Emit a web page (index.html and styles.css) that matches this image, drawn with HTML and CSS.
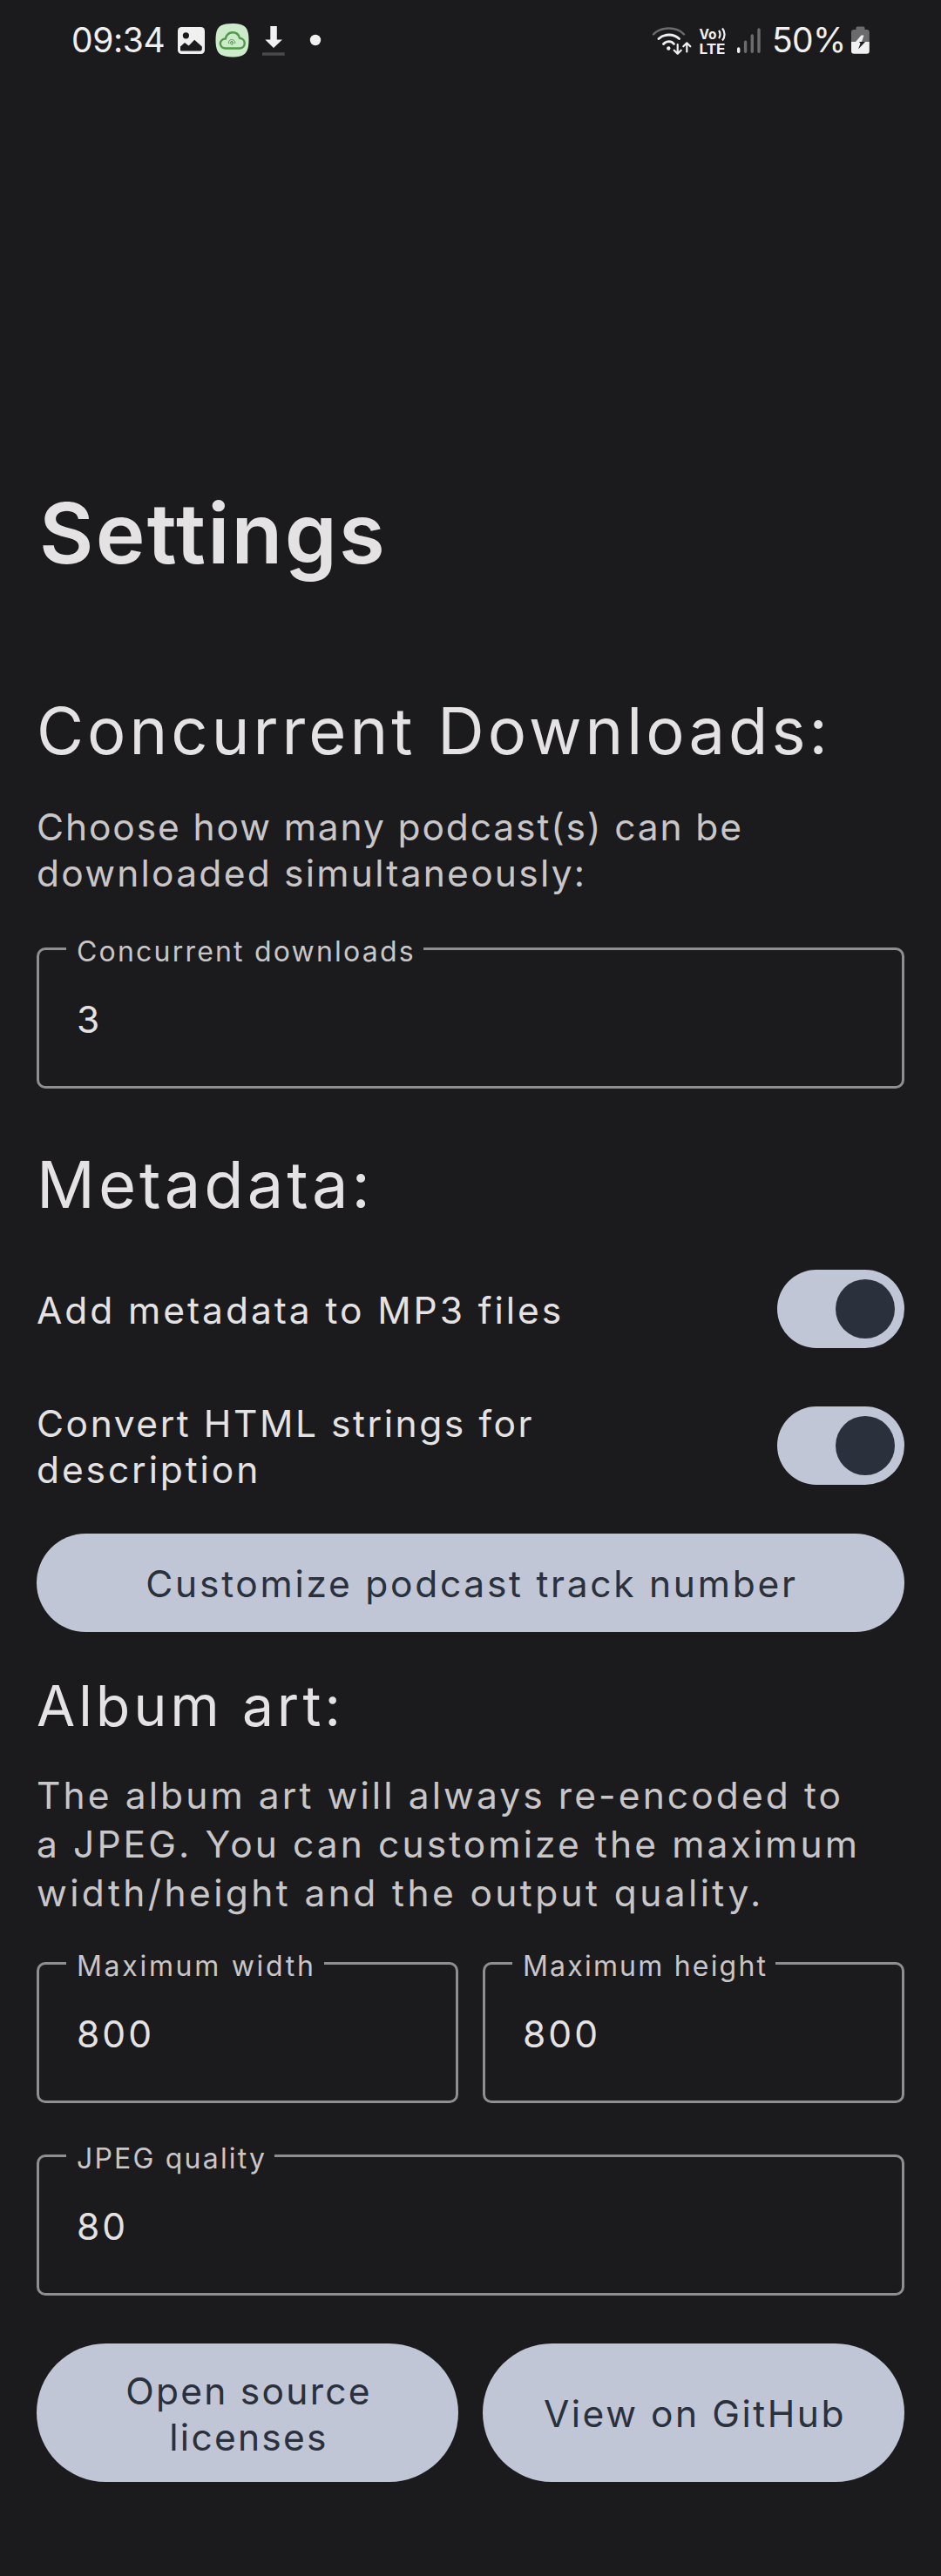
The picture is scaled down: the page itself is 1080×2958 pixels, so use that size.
FILE: index.html
```html
<!DOCTYPE html>
<html lang="en">
<head>
<meta charset="utf-8">
<title>Settings</title>
<link rel="stylesheet" href="styles.css">
</head>
<body>
<header class="status">
  <div class="status-group">
    <span class="clock">09:34</span>
    <svg width="40" height="92" viewBox="200 0 40 92"><rect x="204" y="31" width="31" height="31" rx="4.500" fill="#f0f0f0"/><circle cx="213.400" cy="40.800" r="3.600" fill="#1b1b1d"/><path d="M207 58v-4.500l5-4.400 4.600 3.400 6.600-6.800 8.600 7.900V57l-1.300 1.500H208z" fill="#1b1b1d"/></svg>
    <svg width="52" height="92" viewBox="240 0 52 92"><path d="M266.500 27c14.500 0 19 4.500 19 19s-4.500 19.500-19 19.500-19-5-19-19.500 4.500-19 19-19z" fill="#cdeaca"/><path d="M259 55.500c-8.500-.5-8-10.500-.2-11 2.200-9.500 14-9.500 16.200-.8 7.500.6 7.800 11.300.2 11.800z" fill="none" stroke="#509a48" stroke-width="2.400"/><path d="M262.500 50c-1-6 8-6 7.200 0M264.300 50.500c-.6-4 4-4 3.500 0M266.100 47v5" fill="none" stroke="#509a48" stroke-width="1"/></svg>
    <svg width="48" height="92" viewBox="292 0 48 92"><path d="M310.300 30h7.500v15.500h6.200l-10 9.500-9.700-9.500h6z" fill="#f0f0f0"/><path d="M301 60.300h25.700v3.500H301z" fill="#4a4a4c"/></svg>
    <svg width="40" height="92" viewBox="340 0 40 92"><circle cx="362" cy="46" r="6.200" fill="#f0f0f0"/></svg>
  </div>
  <div class="status-group">
    <svg width="56" height="92" viewBox="740 0 56 92" fill="none" stroke="#f0f0f0" stroke-width="2.800" stroke-linecap="round" stroke-linejoin="round"><path d="M750 39.300c9-9 26-9 35 0" stroke="#6b6b6d" stroke-width="2.400"/><path d="M756 44.500c6.500-6 17-6 23.500 0"/><path d="M761.500 50.500c3.500-3.800 9-3.800 12 0"/><circle cx="767.300" cy="55.500" r="2.200" fill="#f0f0f0" stroke="none"/><path d="M777.700 51v10.500m-4-3.800 4 4 4-4M788.300 59.500V49.500m-4 3.800 4-4 4 4" stroke-width="2.200"/></svg>
    <svg class="volte" width="44" height="92" viewBox="796 0 44 92"><text x="802.500" y="44.800" textLength="20" lengthAdjust="spacingAndGlyphs">Vo</text><text x="802.500" y="62" textLength="30" lengthAdjust="spacingAndGlyphs">LTE</text><path d="M825 35c2 2.500 2 6.500 0 9M829 32.500c3.400 4 3.400 10 0 14" fill="none" stroke="#f0f0f0" stroke-width="2.200"/></svg>
    <svg width="40" height="92" viewBox="840 0 40 92" fill="none" stroke="#6b6b6d" stroke-width="3.400" stroke-linecap="round"><path d="M847.700 56v3.300" stroke="#f0f0f0"/><path d="M855.600 48.200v11.100M863.300 41v18.300M871 34v25.300"/></svg>
    <span class="battery-level">50%</span>
    <svg width="30" height="92" viewBox="973 0 30 92"><path d="M982.500 34v-2q0-1.500 1.500-1.500h7q1.500 0 1.500 1.500v2h2.300q3 0 3 3v11H977V37q0-3 3-3z" fill="#6b6b6d"/><path d="M977 48h20.800v10.700q0 3-3 3H980q-3 0-3-3z" fill="#f0f0f0"/><path d="M988.500 40.500h3l-2.500 7.500h-7z" fill="#f0f0f0"/><path d="M986 48h7l-8 8.500 2.500-6.500z" fill="#1b1b1d"/></svg>
  </div>
</header>
<main class="page">
  <h1 class="title">Settings</h1>
  <section class="section">
    <h2 class="heading">Concurrent Downloads:</h2>
    <p class="intro"><span class="snug">Choose how many podcast(s) can be</span><br><span class="normal">downloaded simultaneously:</span></p>
    <div class="field"><span class="field-label">Concurrent downloads</span><span class="field-value">3</span></div>
  </section>
  <section class="section metadata">
    <h2 class="heading">Metadata:</h2>
    <div class="option"><p class="option-text wide-text">Add metadata to MP3 files</p><span class="switch"><span class="thumb"></span></span></div>
    <div class="option"><p class="option-text">Convert HTML strings for<br><span class="wide-text">description</span></p><span class="switch"><span class="thumb"></span></span></div>
    <button class="button wide">Customize podcast track number</button>
  </section>
  <section class="section album">
    <h2 class="heading small">Album art:</h2>
    <p class="intro">The album art will always re-encoded to<br>a JPEG. You can customize the maximum<br><span class="loose">width/height and the output quality.</span></p>
    <div class="pair">
      <div class="field"><span class="field-label spaced">Maximum width</span><span class="field-value">800</span></div>
      <div class="field"><span class="field-label">Maximum height</span><span class="field-value">800</span></div>
    </div>
    <div class="field quality"><span class="field-label">JPEG quality</span><span class="field-value">80</span></div>
    <div class="pair actions">
      <button class="button normal">Open source<br>licenses</button>
      <button class="button">View on GitHub</button>
    </div>
  </section>
</main>
</body>
</html>
```
FILE: styles.css
```css
* { box-sizing: border-box; }
body { margin: 0; background: #1b1b1d; color: #e5e2e4; font-family: Inter, "Noto Sans", sans-serif; font-size: 42.5px; line-height: 53px; }
h1, h2, p { margin: 0; font-weight: 400; }

/* Status bar */
.status { display: flex; justify-content: space-between; height: 92px; padding: 0 77px 0 82px; color: #f0f0f0; font-size: 39px; line-height: 92px; }
.status-group { display: flex; }
.status svg { display: block; }
.clock { width: 118px; letter-spacing: -0.4px; }
.battery-level { width: 93px; padding-left: 6px; letter-spacing: -0.6px; }
.volte { fill: #f0f0f0; font-size: 16.5px; font-weight: 700; }

/* Page and headings */
.page { padding: 464px 42px 108px; }
.title { font-size: 96px; line-height: 112px; font-weight: 600; letter-spacing: 2.3px; padding-left: 3px; margin-bottom: 129px; }
.heading { font-size: 74px; line-height: 84px; letter-spacing: 4.06px; white-space: nowrap; }
.heading.small { font-size: 64px; line-height: 74px; letter-spacing: 4.2px; }
.intro { color: #c8c6c8; margin: 42px 0 59px; white-space: nowrap; }

/* Tracking */
.snug { letter-spacing: 1.89px; }
.normal { letter-spacing: 2.24px; }
.wide-text { letter-spacing: 2.9px; }
.loose { letter-spacing: 3.4px; }

/* Outlined text fields */
.field { position: relative; height: 162px; border: 3px solid #8f8f92; border-radius: 10px; padding: 53px 43px 0; }
.field-label { position: absolute; left: 31px; top: -16px; padding: 0 9px 0 12px; background: #1b1b1d; color: #c8c6c8; font-size: 32px; line-height: 36px; letter-spacing: 2.2px; white-space: nowrap; }
.field-label.spaced { letter-spacing: 2.7px; }
.field-value { display: block; letter-spacing: 3.05px; }

/* Options */
.metadata { margin-top: 68px; }
.option { display: flex; align-items: center; justify-content: space-between; }
.metadata .heading + .option { margin: 56px 0 57px; }
.option-text { padding: 3px 0 1px; white-space: nowrap; letter-spacing: 2.56px; }
.option-text.wide-text { letter-spacing: 2.95px; }
.switch { display: flex; align-items: center; justify-content: flex-end; width: 146px; height: 90px; padding-right: 11px; border-radius: 45px; background: #c0c6d5; }
.thumb { width: 68px; height: 68px; border-radius: 50%; background: #2a303c; }

/* Buttons */
.button { display: block; width: 100%; border: 0; padding: 2px 0 0 3px; border-radius: 80px; background: #c0c6d5; color: #2a303c; font: inherit; letter-spacing: 2.55px; }
.button.wide { height: 113px; margin-top: 46px; letter-spacing: 2.72px; }
.button.normal { letter-spacing: 2.24px; }

.album { margin-top: 48px; }
.album .intro { line-height: 56px; margin: 38px 0 51px; letter-spacing: 3.1px; }
.pair { display: grid; grid-template-columns: 1fr 1fr; gap: 28px; }
.quality { margin: 59px 0 55px; }
.actions { height: 159px; }
```
